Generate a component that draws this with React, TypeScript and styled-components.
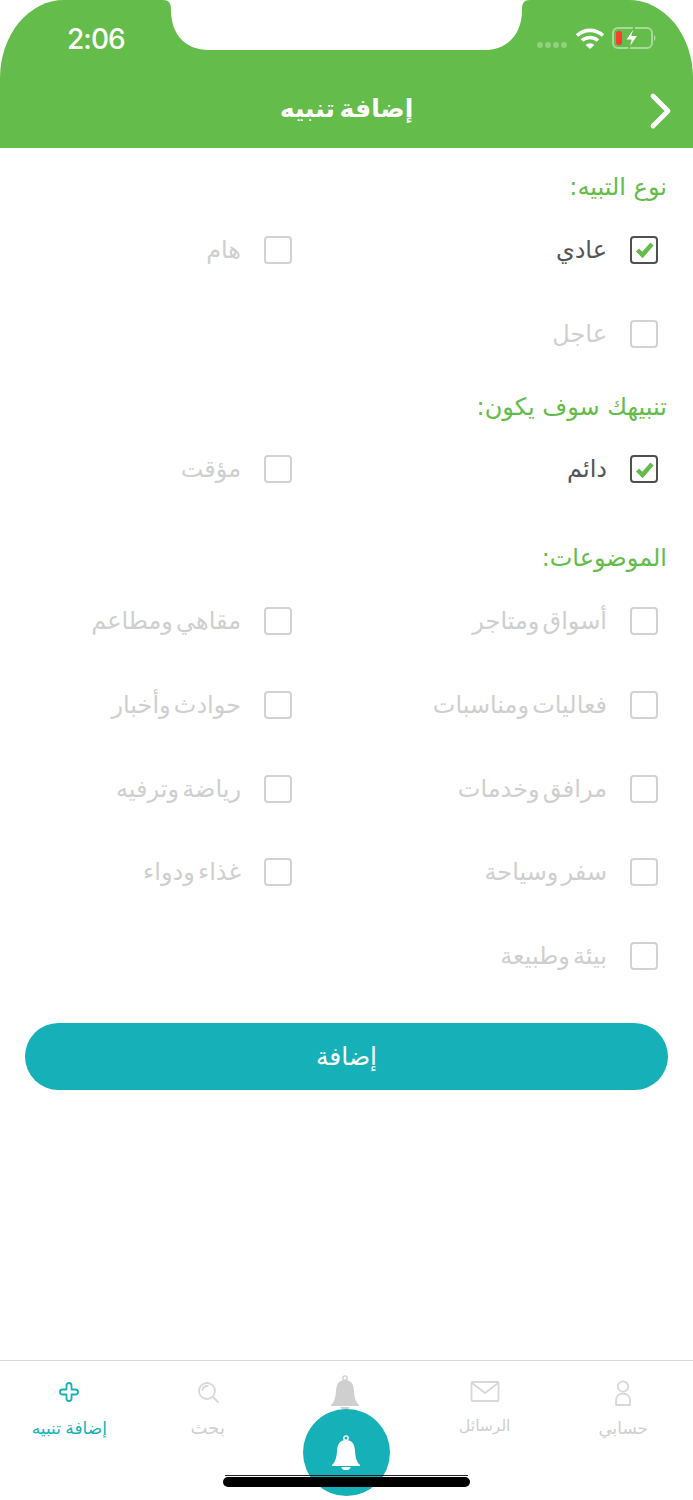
import React from "react";
import styled, { createGlobalStyle } from "styled-components";

const ARABIC = `"DejaVu Sans", "Noto Sans", sans-serif`;
const GREEN = "#64bc4a";
const TEAL = "#16b1b8";

const Global = createGlobalStyle`
  html, body { margin: 0; padding: 0; background: #fff; }
  * { box-sizing: border-box; }
`;

const Screen = styled.div`
  position: relative;
  width: 693px;
  height: 1500px;
  overflow: hidden;
  display: flex;
  flex-direction: column;
  background: #fff;
  direction: rtl;
  font-family: ${ARABIC};
`;

const Header = styled.header`
  position: relative;
  height: 148px;
  flex: none;
  background: ${GREEN};
  border-radius: 64px 64px 0 0 / 78px 78px 0 0;
  display: flex;
  flex-direction: column;
`;

const NotchShape = styled.svg`
  position: absolute;
  left: 163px;
  top: 0;
`;

const StatusBar = styled.div`
  direction: ltr;
  height: 76px;
  flex: none;
  display: flex;
  align-items: flex-start;
  padding: 27px 35px 0 67px;
  justify-content: space-between;
`;

const Clock = styled.span`
  font-family: Inter, "Liberation Sans", sans-serif;
  font-size: 28px;
  line-height: 24px;
  font-weight: 500;
  letter-spacing: -0.9px;
  color: #fff;
`;

const StatusIcons = styled.svg`
  display: block;
`;

const TitleBar = styled.div`
  position: relative;
  flex: 1;
  display: flex;
  align-items: center;
  justify-content: center;
  padding-bottom: 6px;
`;

const Title = styled.h1`
  margin: 0;
  font-size: 25px;
  line-height: 40px;
  font-weight: 700;
  word-spacing: -4px;
  color: #fff;
`;

const BackButton = styled.svg`
  position: absolute;
  right: 20px;
  top: 16px;
`;

const Form = styled.main`
  flex: 1;
  display: flex;
  flex-direction: column;
  padding-top: 19px;
`;

const Section = styled.section<{ $after: number }>`
  margin-bottom: ${(p) => p.$after}px;
`;

const SectionTitle = styled.h2`
  margin: 0;
  height: 41px;
  padding-right: 26px;
  font-size: 24px;
  line-height: 41px;
  font-weight: 400;
  color: ${GREEN};
`;

const Options = styled.div`
  display: grid;
  grid-template-columns: 366px 1fr;
  grid-auto-rows: 83.75px;
  padding-right: 35px;
`;

const Option = styled.label`
  display: flex;
  align-items: center;
  gap: 23px;
`;

const Box = styled.span<{ $on: boolean }>`
  width: 28px;
  height: 28px;
  flex: none;
  display: flex;
  align-items: center;
  justify-content: center;
  border-radius: 4px;
  border: 2px solid ${(p) => (p.$on ? "#4f4f4f" : "#d2d2d2")};
`;

const OptionText = styled.span<{ $on: boolean }>`
  font-size: 24px;
  line-height: 36px;
  word-spacing: -4.5px;
  color: ${(p) => (p.$on ? "#555" : "#cfcfcf")};
`;

const SubmitButton = styled.button`
  display: block;
  margin: 0 25px;
  height: 67px;
  border: 0;
  border-radius: 34px;
  background: ${TEAL};
  color: #fff;
  font-family: inherit;
  font-size: 25px;
`;

const TabBar = styled.nav`
  height: 140px;
  flex: none;
  border-top: 1px solid #d8d8d8;
  display: grid;
  grid-template-columns: repeat(5, 138.5px);
  justify-content: end;
  padding-top: 14px;
`;

const Tab = styled.div`
  display: flex;
  flex-direction: column;
  align-items: center;
  gap: 6px;
`;

const TabIcon = styled.svg`
  display: block;
`;

const TabLabel = styled.span<{ $active?: boolean; $size?: number; $lift?: number }>`
  font-size: ${(p) => p.$size ?? 17}px;
  line-height: 26px;
  word-spacing: -1px;
  margin-top: ${(p) => -(p.$lift ?? 0)}px;
  color: ${(p) => (p.$active ? TEAL : "#cfcfcf")};
`;

const Fab = styled.div`
  position: absolute;
  left: 303px;
  top: 1409px;
  width: 87px;
  height: 87px;
  border-radius: 50%;
  background: ${TEAL};
  display: flex;
  align-items: center;
  justify-content: center;
`;

const HomeIndicator = styled.div`
  position: absolute;
  left: 223px;
  top: 1477px;
  width: 247px;
  height: 10px;
  border-radius: 5px;
  background: #000;
  &::before {
    content: "";
    position: absolute;
    left: 2px;
    right: 2px;
    top: -2px;
    height: 1px;
    background: #222;
  }
`;

const Check = () => (
  <svg width="19" height="17" viewBox="0 0 19 17" fill="none">
    <path d="M2.5 9 L7.5 14 L17 3" stroke={GREEN} strokeWidth="4.4" strokeLinejoin="miter" />
  </svg>
);

const Bell = ({ size, color }: { size: number; color: string }) => (
  <svg width={size} height={size * 1.17} viewBox="1 0 30 35" fill={color}>
    <circle cx="15" cy="3" r="2.2" fill="none" stroke={color} strokeWidth="1.4" />
    <path d="M15 5 C8 5 6.5 10 6 16 C5.6 22 4.5 27 1 30 L1 31 L29 31 L29 30 C25.5 27 24.4 22 24 16 C23.5 10 22 5 15 5 Z" />
    <path d="M10.5 32 A4.5 3 0 0 0 19.5 32 Z" />
  </svg>
);

type Item = { text: string; on?: boolean } | null;

const OptionGrid = ({ items }: { items: Item[] }) => (
  <Options>
    {items.map((item, i) =>
      item ? (
        <Option key={i}>
          <Box $on={!!item.on}>{item.on && <Check />}</Box>
          <OptionText $on={!!item.on}>{item.text}</OptionText>
        </Option>
      ) : (
        <span key={i} />
      )
    )}
  </Options>
);

export default function App() {
  return (
    <>
      <Global />
      <Screen>
        <Header>
          <NotchShape width="367" height="52" viewBox="0 0 367 52">
            <path
              d="M0 0 C6 0 8 3 8 10 C8 34 22 50 46 50 L321 50 C345 50 359 34 359 10 C359 3 361 0 367 0 Z"
              fill="#fff"
            />
          </NotchShape>
          <StatusBar>
            <Clock>2:06</Clock>
            <StatusIcons width="122" height="24" viewBox="0 0 122 24" fill="none">
              <g fill="#fff" opacity="0.3">
                <circle cx="4" cy="18" r="3" />
                <circle cx="12" cy="18" r="3" />
                <circle cx="20" cy="18" r="3" />
                <circle cx="28" cy="18" r="3" />
              </g>
              <path d="M41 8.5 A19 19 0 0 1 67 8.5" stroke="#fff" strokeWidth="3.6" />
              <path d="M46 13.5 A12 12 0 0 1 62 13.5" stroke="#fff" strokeWidth="3.6" />
              <path d="M49.5 18 L54 22 L58.5 18 A6.5 6.5 0 0 0 49.5 18 Z" fill="#fff" />
              <rect x="77" y="1" width="39" height="20" rx="5" stroke="#fff" strokeOpacity="0.45" strokeWidth="2" />
              <path d="M118 8 C120 9 120 13 118 14 Z" fill="#fff" fillOpacity="0.45" />
              <rect x="80" y="4" width="6" height="14" rx="2.5" fill="#ff3b30" />
              <path d="M99 -1 L89.5 13 L95 13 L92.5 22 L102 8.5 L96 8.5 Z" fill="#fff" stroke={GREEN} strokeWidth="1.2" />
            </StatusIcons>
          </StatusBar>
          <TitleBar>
            <Title>إضافة تنبيه</Title>
            <BackButton width="24" height="38" viewBox="0 0 24 38" fill="none">
              <path d="M4 4 L19 19 L4 34" stroke="#fff" strokeWidth="4.8" strokeLinecap="round" strokeLinejoin="round" />
            </BackButton>
          </TitleBar>
        </Header>

        <Form>
          <Section $after={11}>
            <SectionTitle>نوع التبيه:</SectionTitle>
            <OptionGrid items={[{ text: "عادي", on: true }, { text: "هام" }, { text: "عاجل" }]} />
          </Section>
          <Section $after={27}>
            <SectionTitle>تنبيهك سوف يكون:</SectionTitle>
            <OptionGrid items={[{ text: "دائم", on: true }, { text: "مؤقت" }]} />
          </Section>
          <Section $after={25}>
            <SectionTitle>الموضوعات:</SectionTitle>
            <OptionGrid
              items={[
                { text: "أسواق ومتاجر" },
                { text: "مقاهي ومطاعم" },
                { text: "فعاليات ومناسبات" },
                { text: "حوادث وأخبار" },
                { text: "مرافق وخدمات" },
                { text: "رياضة وترفيه" },
                { text: "سفر وسياحة" },
                { text: "غذاء ودواء" },
                { text: "بيئة وطبيعة" },
              ]}
            />
          </Section>
          <SubmitButton>إضافة</SubmitButton>
        </Form>

        <TabBar>
          <Tab>
            <TabIcon width="26" height="34" viewBox="0 0 26 34" fill="none" stroke="#d8d8d8" strokeWidth="1.8">
              <circle cx="13" cy="11.5" r="5.2" />
              <path d="M6 30 L6 25.5 C6 21 9 18.5 13 18.5 C17 18.5 20 21 20 25.5 L20 30 Z" strokeLinejoin="round" />
            </TabIcon>
            <TabLabel>حسابي</TabLabel>
          </Tab>
          <Tab>
            <TabIcon width="30" height="34" viewBox="0 0 30 34" fill="none" stroke="#d8d8d8" strokeWidth="1.8">
              <rect x="1.5" y="7" width="27" height="19" rx="1" />
              <path d="M2 8 L15 18 L28 8" />
            </TabIcon>
            <TabLabel $size={15.5} $lift={2}>الرسائل</TabLabel>
          </Tab>
          <Tab>
            <Bell size={30} color="#cfcfcf" />
          </Tab>
          <Tab>
            <TabIcon width="26" height="34" viewBox="0 0 26 34" fill="none" stroke="#d8d8d8" strokeWidth="1.8">
              <circle cx="12" cy="16" r="8" />
              <path d="M7.5 15 C8 12.5 10 11 12.5 11 M18 22 L23 27" strokeLinecap="round" />
            </TabIcon>
            <TabLabel $size={18}>بحث</TabLabel>
          </Tab>
          <Tab>
            <TabIcon width="24" height="34" viewBox="0 0 24 34" fill="none" stroke={TEAL} strokeWidth="1.8">
              <path
                d="M9.5 10.5 A2.5 2.5 0 0 1 14.5 10.5 L14.5 14.5 L18.5 14.5 A2.5 2.5 0 0 1 18.5 19.5 L14.5 19.5 L14.5 23.5 A2.5 2.5 0 0 1 9.5 23.5 L9.5 19.5 L5.5 19.5 A2.5 2.5 0 0 1 5.5 14.5 L9.5 14.5 Z"
                strokeLinejoin="round"
              />
            </TabIcon>
            <TabLabel $active>إضافة تنبيه</TabLabel>
          </Tab>
        </TabBar>

        <Fab>
          <Bell size={30} color="#fff" />
        </Fab>
        <HomeIndicator />
      </Screen>
    </>
  );
}
